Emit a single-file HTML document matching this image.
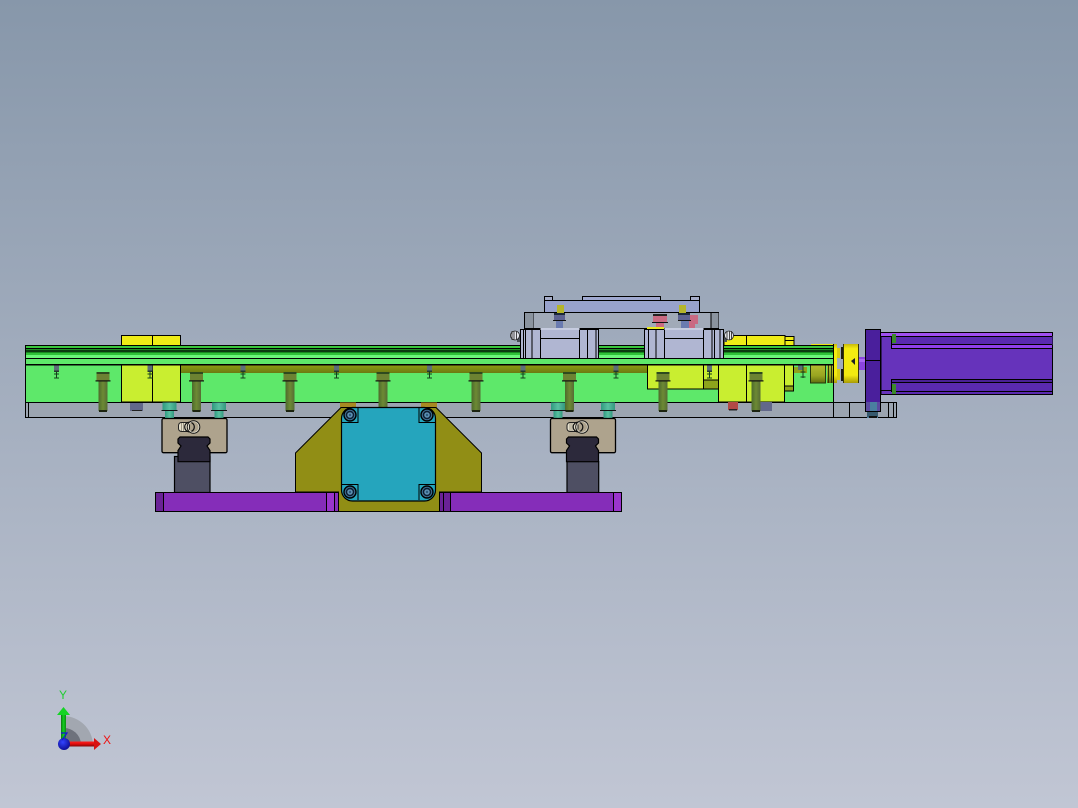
<!DOCTYPE html>
<html>
<head>
<meta charset="utf-8">
<style>
html,body{margin:0;padding:0;width:1078px;height:808px;overflow:hidden;background:#a5afbe}
svg{display:block}
</style>
</head>
<body>
<svg width="1078" height="808" viewBox="0 0 1078 808" xmlns="http://www.w3.org/2000/svg">
<defs>
<linearGradient id="bg" x1="0" y1="0" x2="0" y2="1"><stop offset="0" stop-color="#8797aa"/><stop offset="1" stop-color="#c1c6d4"/></linearGradient>
<linearGradient id="olv" x1="0" y1="0" x2="0" y2="1"><stop offset="0" stop-color="#8f9e12"/><stop offset="1" stop-color="#6b7a12"/></linearGradient>
<linearGradient id="cyl" x1="0" y1="0" x2="0" y2="1"><stop offset="0" stop-color="#b4bb30"/><stop offset=".6" stop-color="#98a420"/><stop offset="1" stop-color="#5f6c10"/></linearGradient>
<linearGradient id="sh" x1="0" y1="0" x2="1" y2="0"><stop offset="0" stop-color="#4d6a2c"/><stop offset=".5" stop-color="#6d8a34"/><stop offset="1" stop-color="#566b34"/></linearGradient>
<linearGradient id="teal" x1="0" y1="0" x2="1" y2="0"><stop offset="0" stop-color="#2f9a80"/><stop offset=".5" stop-color="#58c0a0"/><stop offset="1" stop-color="#33987f"/></linearGradient>
<linearGradient id="cpl" x1="0" y1="0" x2="0" y2="1"><stop offset="0" stop-color="#c8ba0c"/><stop offset=".12" stop-color="#f4ec10"/><stop offset=".8" stop-color="#f2ea10"/><stop offset="1" stop-color="#a89a08"/></linearGradient>
<linearGradient id="rd" x1="0" y1="0" x2="0" y2="1"><stop offset="0" stop-color="#ff2020"/><stop offset=".5" stop-color="#e00c0c"/><stop offset="1" stop-color="#800808"/></linearGradient>
<linearGradient id="gr" x1="0" y1="0" x2="1" y2="0"><stop offset="0" stop-color="#0a7a10"/><stop offset=".5" stop-color="#12d020"/><stop offset="1" stop-color="#0a8a14"/></linearGradient>
<radialGradient id="bl" cx=".4" cy=".35" r=".7"><stop offset="0" stop-color="#3344ff"/><stop offset="1" stop-color="#0a0a90"/></radialGradient>
<g id="bolt">
<rect x="-4.500" y="0" width="9" height="39" fill="url(#sh)"/>
<rect x="-4" y="38" width="8" height="2" fill="#1c2410"/>
<rect x="-6.500" y="0" width="13" height="9" fill="#6c8232"/>
<rect x="-6.500" y="0" width="13" height="2" fill="#2e4a1e"/>
<rect x="-7.500" y="8.300" width="15" height="1.200" fill="#111"/>
</g>
<g id="scr">
<rect x="-2.500" y="0" width="5" height="6" fill="#5c7078"/>
<rect x="-2.500" y="5" width="5" height="1.500" fill="#25382c"/>
<path d="M0 6V13M-2.500 8.500H2.500M-2.500 12.500H2.500" stroke="#14401c" stroke-width="1" fill="none"/>
</g>
<g id="tb">
<rect x="-4.500" y="0" width="9" height="16" fill="url(#teal)"/>
<rect x="-7" y="0" width="14" height="8" fill="url(#teal)"/>
<rect x="-8" y="7.500" width="16" height="1" fill="#111"/>
</g>
<g id="csc">
<circle r="6" fill="#3f6f92" stroke="#000" stroke-width="1.400"/>
<circle r="3.500" fill="#5d8fb2" stroke="#0b1c30" stroke-width="1.400"/>
<circle r="1.200" fill="#2c5a7c"/>
</g>
<g id="cg">
<rect x=".5" y=".5" width="65" height="34.200" rx="1.500" fill="#aea38d" stroke="#000" stroke-width="1.300"/>
<path d="M16.500 21L18.500 19H46.500L48.500 21V25L45.500 28 48.500 32.500V43.700H16.500V32.500L19.500 28 16.500 25Z" fill="#2c293b" stroke="#000" stroke-width="1.200"/>
<rect x="17" y="4.500" width="11" height="9" rx="3" fill="#e6e0cc" stroke="#222" stroke-width="1"/>
<path d="M20 5V13M22 5V13" stroke="#8a8474" stroke-width=".8"/>
<circle cx="28" cy="9" r="4.800" fill="none" stroke="#111" stroke-width="1.200"/>
<circle cx="32" cy="9" r="5.600" fill="none" stroke="#e6e2d4" stroke-width="1"/>
<circle cx="32" cy="9" r="6.300" fill="none" stroke="#111" stroke-width="1"/>
</g>
</defs>

<rect width="1078" height="808" fill="url(#bg)"/>

<g shape-rendering="crispEdges">
<!-- base plate -->
<rect x="25.500" y="402.500" width="871" height="15" fill="#9ca5b1" stroke="#000"/>
<path d="M28.500 402V417M833.500 402V417M849.500 402V417M888.500 402V417M893.500 402V417" stroke="#000"/>

<!-- yellow top blocks -->
<rect x="121.500" y="335.500" width="59" height="10" fill="#efec16" stroke="#000"/>
<path d="M152.500 335V345" stroke="#000"/>
<rect x="724" y="335.500" width="61" height="10" fill="#efec16" stroke="#000"/>
<path d="M746.500 335V345" stroke="#000"/>
<rect x="785" y="336.500" width="9" height="9" fill="#efec16" stroke="#000"/>
<path d="M785 340.500H794" stroke="#000"/>
<rect x="811" y="344" width="22" height="2" fill="#e8e412"/>

<!-- green body -->
<rect x="25.500" y="364.500" width="808" height="38" fill="#5ee86a" stroke="#000"/>
<rect x="121.500" y="365" width="59" height="37" fill="#c9ee30" stroke="#000"/>
<path d="M152.500 365V402" stroke="#000"/>
<rect x="181" y="365" width="466" height="8" fill="url(#olv)"/>
<rect x="647.500" y="365" width="56" height="24" fill="#c9ee30" stroke="#000"/>
<rect x="703.500" y="365" width="15" height="16" fill="#c9ee30" stroke="#000"/>
<rect x="703.500" y="380" width="15" height="9" fill="#8da41c" stroke="#000"/>
<rect x="718.500" y="365" width="66" height="37" fill="#c9ee30" stroke="#000"/>
<path d="M746.500 365V402" stroke="#000"/>
<rect x="784.500" y="365" width="9" height="21" fill="#c9ee30" stroke="#000"/>
<rect x="784.500" y="386" width="9" height="5" fill="#8da41c" stroke="#000"/>
<rect x="794" y="367" width="13" height="6" fill="#90a31a"/>
<rect x="810.500" y="365" width="15" height="18" fill="url(#cyl)" stroke="#24380f"/>
<rect x="827" y="365" width="6" height="18" fill="url(#cyl)"/>
<path d="M828.500 365V383M831.500 365V383" stroke="#2c3a10"/>
<rect x="798" y="365" width="5" height="5" fill="#5c7078"/>
<path d="M803 365V378M800.500 372H805.500M800.500 377H805.500" stroke="#14401c"/>

<!-- rail -->
<rect x="25" y="345" width="808" height="20" fill="#5ee86a"/>
<rect x="25" y="345" width="808" height="1" fill="#000"/>
<rect x="25" y="346" width="808" height="2" fill="#39c63c"/>
<rect x="25" y="348" width="808" height="1" fill="#000"/>
<rect x="25" y="349" width="808" height="1.500" fill="#1f8e24"/>
<rect x="25" y="350" width="808" height="2" fill="#0b3a10"/>
<rect x="25" y="352" width="808" height="1" fill="#188a20"/>
<rect x="25" y="353" width="808" height="2" fill="#2fc238"/>
<rect x="25" y="355" width="808" height="3" fill="#6cf57a"/>
<rect x="25" y="358" width="808" height="1" fill="#000"/>
<rect x="25" y="359" width="808" height="5" fill="#5ee86a"/>
<rect x="25" y="364" width="808" height="1.500" fill="#000"/>
<rect x="25" y="345" width="1" height="20" fill="#000"/>
<rect x="833" y="345" width="1" height="57" fill="#000"/>

<!-- stubs -->
<rect x="130" y="403" width="13" height="8" fill="#62688a"/><rect x="132" y="410" width="10" height="1" fill="#222"/>
<rect x="728" y="402" width="10" height="8" fill="#b24a46"/><rect x="729" y="409" width="8" height="1.500" fill="#222"/>
<rect x="760" y="402" width="12" height="9" fill="#62688a"/>
</g>

<!-- bolts -->
<use href="#bolt" x="103" y="372"/><use href="#bolt" x="196.500" y="372"/><use href="#bolt" x="290" y="372"/><use href="#bolt" x="383" y="372"/><use href="#bolt" x="476" y="372"/><use href="#bolt" x="569.500" y="372"/><use href="#bolt" x="663" y="372"/><use href="#bolt" x="756" y="372"/>
<!-- small screws -->
<use href="#scr" x="56.500" y="365.500"/><use href="#scr" x="150" y="365.500"/><use href="#scr" x="243" y="365.500"/><use href="#scr" x="336.500" y="365.500"/><use href="#scr" x="429.500" y="365.500"/><use href="#scr" x="523" y="365.500"/><use href="#scr" x="616" y="365.500"/><use href="#scr" x="709.500" y="365.500"/>
<!-- teal bolts -->
<use href="#tb" x="169.500" y="402.500"/><use href="#tb" x="219" y="402.500"/><use href="#tb" x="558" y="402.500"/><use href="#tb" x="608" y="402.500"/>

<!-- olive bracket -->
<rect x="340" y="402.500" width="16" height="5" fill="#a88a22"/>
<rect x="421" y="402.500" width="16" height="5" fill="#a88a22"/>
<path d="M295.500 453L341 407.500H436L481.500 453V492H439.500V511.500H338.500V492H295.500Z" fill="#918e15" stroke="#000" stroke-width="1"/>

<!-- teal plate -->
<rect x="341.500" y="407.500" width="94" height="93.500" rx="11" fill="#25a5bd" stroke="#000" stroke-width="1.200"/>
<path d="M341.500 422.500H358V407.500M435.500 422.500H419V407.500M341.500 484.500H358V500M435.500 484.500H419V500" fill="none" stroke="#000"/>
<use href="#csc" x="350" y="415"/><use href="#csc" x="427" y="415"/><use href="#csc" x="350" y="492"/><use href="#csc" x="427" y="492"/>

<!-- risers -->
<rect x="174.500" y="456.500" width="35.500" height="36" fill="#4e4f63" stroke="#000" stroke-width="1.200"/>
<rect x="567" y="461.500" width="31.700" height="31" fill="#4e4f63" stroke="#000" stroke-width="1.200"/>

<!-- linear guides -->
<use href="#cg" x="161.500" y="418"/>
<use href="#cg" x="550" y="418"/>

<!-- purple bars -->
<g shape-rendering="crispEdges">
<rect x="155.500" y="492.500" width="183" height="19" fill="#852db9" stroke="#000"/>
<rect x="156" y="493" width="7.500" height="18" fill="#6a2296"/>
<path d="M163.500 492V511M326.500 492V511M334.500 492V511" stroke="#000"/>
<rect x="327" y="493" width="7" height="18" fill="#9a35cc"/>
<rect x="439.500" y="492.500" width="182" height="19" fill="#852db9" stroke="#000"/>
<rect x="440" y="493" width="10" height="18" fill="#6a2296"/>
<path d="M443.500 492V511M450.500 492V511M613.500 492V511" stroke="#000"/>
<rect x="614" y="493" width="7" height="18" fill="#9a35cc"/>

<!-- upper carriage -->
<rect x="582.500" y="296.500" width="78" height="5" fill="#a0a9d0" stroke="#000"/>
<rect x="544.500" y="296.500" width="8" height="6" fill="#a5acc8" stroke="#000"/>
<rect x="690.500" y="296.500" width="9" height="6" fill="#a5acc8" stroke="#000"/>
<rect x="544.500" y="300.500" width="155" height="12" fill="#98a2cc" stroke="#000"/>
<rect x="524.500" y="312.500" width="194" height="16" fill="#a1aab8" stroke="#000"/>
<path d="M533 313V328M711 313V328" stroke="#000"/>
<rect x="525" y="313" width="8" height="15" fill="#8b949f"/>
<rect x="711.500" y="313" width="7" height="15" fill="#8b949f"/>

<!-- upper bolts -->
<rect x="557" y="305" width="7" height="8" fill="#b5b52a"/>
<rect x="679" y="305" width="7" height="8" fill="#b5b52a"/>
<rect x="554" y="313" width="11" height="8" fill="#5d6290"/><rect x="554" y="313" width="11" height="2" fill="#1d2a3a"/>
<rect x="553" y="320" width="13" height="1" fill="#111"/>
<rect x="556" y="321" width="7" height="8" fill="#6a7bb0"/>
<rect x="653" y="314" width="14" height="8" fill="#c96a82"/><rect x="653" y="314" width="14" height="2" fill="#222"/>
<rect x="652" y="322" width="16" height="1" fill="#111"/>
<rect x="656" y="323" width="8" height="6" fill="#c96a82"/>
<rect x="687" y="315" width="11" height="9" fill="#c96a82"/>
<rect x="687" y="324" width="8" height="5" fill="#c96a82"/>
<rect x="678" y="313" width="12" height="8" fill="#5d6290"/><rect x="678" y="313" width="12" height="2" fill="#1d2a3a"/>
<rect x="678" y="320" width="13" height="1" fill="#111"/>
<rect x="681" y="321" width="8" height="8" fill="#6a7bb0"/>
<rect x="647" y="327" width="17" height="2" fill="#e8e820"/>

<!-- blocks -->
<rect x="520.500" y="329.500" width="78" height="29" fill="#b0b6d2" stroke="#000" stroke-width="1.300"/>
<path d="M523.500 329V358M525.500 329V358M532 329V358M540.500 329V358M579.500 329V358M587.500 329V358M596 329V358M540 338.500H579" stroke="#000"/>
<rect x="540.500" y="328" width="39" height="2" fill="#c6cce0"/>
<rect x="644.500" y="329.500" width="79" height="29" fill="#b0b6d2" stroke="#000" stroke-width="1.300"/>
<path d="M648.500 329V358M656 329V358M664.500 329V358M703.500 329V358M712 329V358M714.500 329V358M720 329V358M664 338.500H703" stroke="#000"/>
<rect x="664.500" y="328" width="39" height="2" fill="#c6cce0"/>
<rect x="517" y="335" width="3" height="7" fill="#4a5058"/>
<rect x="724" y="335" width="3" height="7" fill="#4a5058"/>
</g>
<g>
<ellipse cx="515" cy="335.500" rx="4.500" ry="4.500" fill="#e6e8ee" stroke="#222" stroke-width=".8"/>
<path d="M512 331V340M514 331V340M516.500 331V340" stroke="#333" stroke-width=".9"/>
<ellipse cx="729" cy="335.500" rx="4.500" ry="4.500" fill="#e6e8ee" stroke="#222" stroke-width=".8"/>
<path d="M727 331V340M729.500 331V340M731.500 331V340" stroke="#333" stroke-width=".9"/>
</g>

<!-- coupling + motor -->
<g shape-rendering="crispEdges">
<rect x="833" y="344" width="4" height="39" fill="url(#cpl)"/>
<path d="M833.500 344V383" stroke="#000"/>
<rect x="837" y="348" width="3" height="10" fill="#d8ce10"/>
<rect x="837" y="369" width="3" height="11" fill="#d8ce10"/>
<rect x="841" y="347" width="2" height="12" fill="#1c1c10"/><rect x="841" y="369" width="2" height="12" fill="#1c1c10"/>
<rect x="843" y="344" width="16" height="39" fill="url(#cpl)"/>
<path d="M843.500 344V383M858.500 344V383" stroke="#3a3608"/>
<rect x="859" y="357" width="6" height="13" fill="#8a45e0"/>
<rect x="859" y="359" width="6" height="3" fill="#a867f4"/>

<rect x="881" y="332.500" width="171.500" height="62" fill="#6633bb" stroke="#000"/>
<rect x="881" y="333" width="171" height="3" fill="#a050f0"/>
<rect x="881" y="336" width="10" height="1" fill="#000"/>
<rect x="891.500" y="336" width="161" height="9" fill="#5a2ab0"/>
<path d="M891 336.500H1052M891 344.500H1052M891 348.500H1052M891 379.500H1052M891 382.500H1052M891 391.500H1052M891.500 336V348M891.500 379V392M881 390.500H891" stroke="#000"/>
<rect x="892" y="345" width="160" height="3" fill="#9040ea"/>
<rect x="892" y="380" width="160" height="2" fill="#4a2195"/>
<rect x="892" y="383" width="160" height="8" fill="#5a2ab0"/>
<rect x="892" y="392" width="160" height="2" fill="#5a2ab0"/>
<rect x="892" y="334" width="4" height="9" fill="#3c8a2a"/>
<rect x="892" y="384" width="4" height="10" fill="#3c8a2a"/>
<rect x="867" y="402" width="11" height="16" fill="#4a7ea0"/>
<rect x="867" y="412" width="11" height="5" fill="#36596e"/>
<rect x="869" y="416" width="8" height="2" fill="#111"/>
<rect x="865.500" y="329.500" width="15" height="82" fill="#4a1f9c" stroke="#000" stroke-width="1.200"/>
<path d="M865 360.500H881" stroke="#000"/>
<rect x="866" y="402" width="14" height="9" fill="#5b4aa0"/>
<rect x="870" y="402" width="7" height="9" fill="#4a7ea0"/>
</g>
<path d="M851 361L855 358V365Z" fill="#222"/>

<!-- triad -->
<path d="M64 744V716A30 30 0 0 1 93 744Z" fill="#a2a7b0"/>
<path d="M64 744V728A17 17 0 0 1 81 744Z" fill="#6e727c"/>
<rect x="61" y="715" width="5" height="28" fill="url(#gr)"/>
<path d="M57 715L63.500 707 70 715Z" fill="#14d424"/>
<rect x="66" y="741.500" width="28" height="5" fill="url(#rd)"/>
<path d="M94 738L101 744 94 750Z" fill="#d81212"/>
<circle cx="64" cy="744" r="6" fill="url(#bl)"/>
<path d="M61 733H67L62 740" fill="none" stroke="#1414d8" stroke-width="1.200"/>
<text x="59" y="699" font-family="'Liberation Sans',sans-serif" font-size="12" fill="#22cc33">Y</text>
<text x="103" y="744" font-family="'Liberation Sans',sans-serif" font-size="12" fill="#ee1111">X</text>
</svg>
</body>
</html>
